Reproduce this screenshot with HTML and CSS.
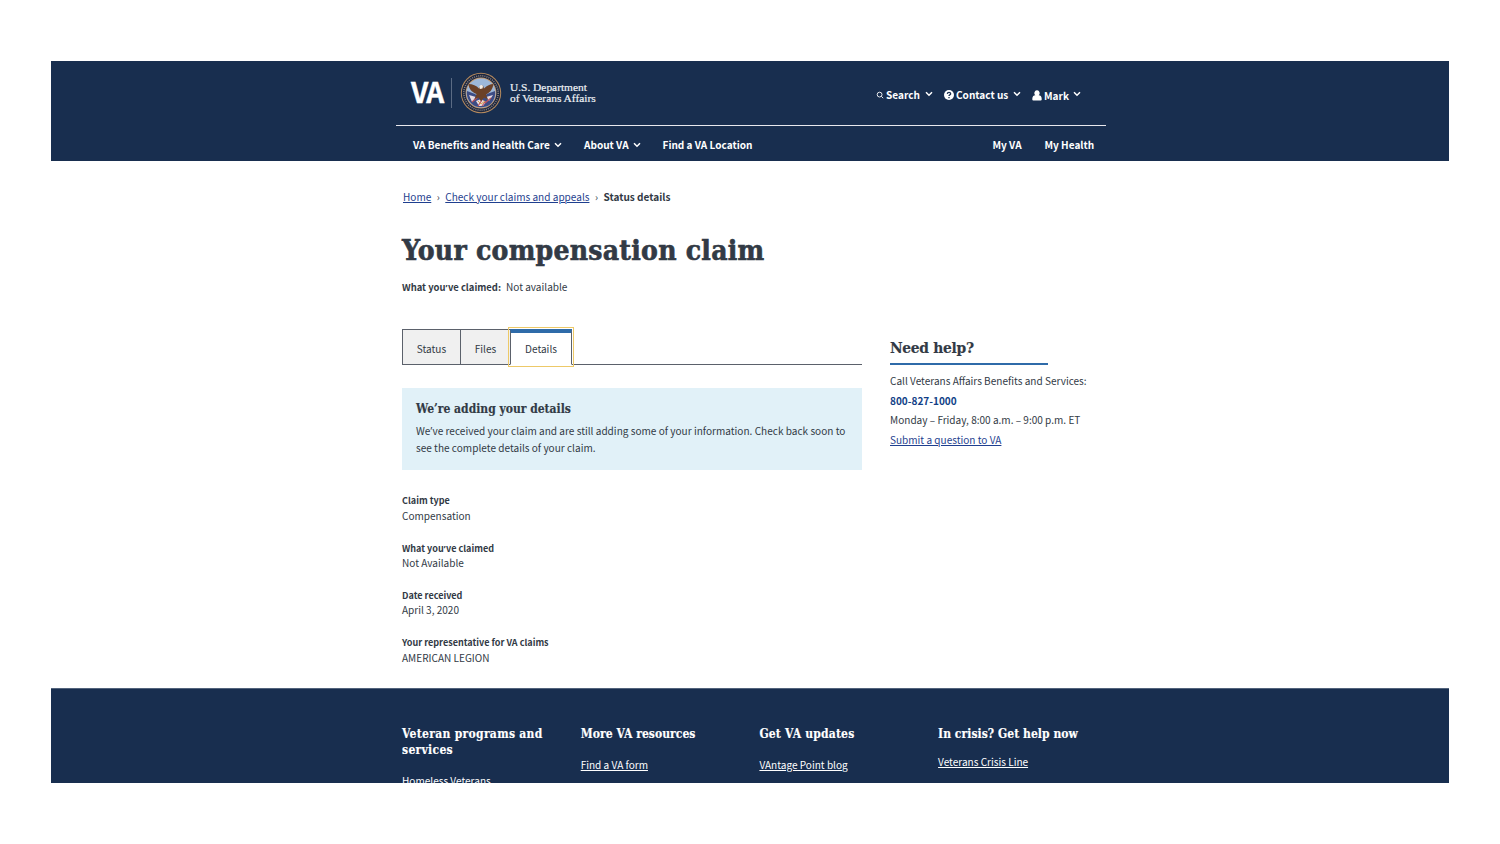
FILE: index.html
```html
<!DOCTYPE html>
<html lang="en">
<head>
<meta charset="utf-8">
<title>Your compensation claim</title>
<link rel="stylesheet" href="styles.css">
</head>
<body>
<div class="page">
  <header class="header">
    <div class="masthead">
      <div class="brand">
        <span class="va">VA</span>
        <span class="divider"></span>
        <svg class="seal" viewBox="0 0 42 42">
          <circle cx="21" cy="21" r="20.2" fill="#b58a5e"/>
          <circle cx="21" cy="21" r="19.2" fill="#1c2740"/>
          <circle cx="21" cy="21" r="17.200" fill="none" stroke="#8f8580" stroke-width="1.500" stroke-dasharray="1 1.1"/>
          <circle cx="21" cy="21" r="15.4" fill="#c39a70"/>
          <circle cx="21" cy="21" r="14.6" fill="#9db8da"/>
          <path d="M7 19l8 3 5 4 2 0 5-4 8-3c1 7-3 14-9 15.500q-5 1.600-10 0C10 32 6 26 7 19z" fill="#3c4c85"/>
          <path d="M9 23l7 2-4 5zM26 25l7-2-4 6zM16 29l5-2 5 3-3 4h-4z" fill="#e6dbe3"/>
          <path d="M12 30l6-5M25 31l6-5M18 34l4-6M22 34l3-4" stroke="#c0545a" stroke-width="1.100"/>
          <path d="M8.500 12c4 0 8 1.500 10.500 4.500l1-2.500 3-.5 1 3c3-3 6-4.500 9.500-4.500-1 6-4 9-7.500 10.500l2 5-4-2-3 4-2.500-4-4 1.500 2-5c-5-2-7.500-5-8-10z" fill="#6b4128"/>
          <path d="M19.300 14.500q2-2.500 3.700-.5l-.5 2.500-2.700.5z" fill="#f6efe6"/>
          <path d="M18 29l3 3 4-3" fill="none" stroke="#d3a24d"/>
        </svg>
        <span class="dept">U.S. Department<br><span class="dept-sub">of Veterans Affairs</span></span>
      </div>
      <div class="tools">
        <a class="tool search"><svg class="ic-search" viewBox="0 0 8 8"><circle cx="3.600" cy="3.600" r="2.400"/><path d="M5.300 5.300L7.200 7.200"/></svg><span class="tool-text">Search</span><svg class="chev" viewBox="0 0 8 6"><path d="M1 1.200l3 3 3-3"/></svg></a>
        <a class="tool contact"><svg class="ic-help" viewBox="0 0 10 10"><circle cx="5" cy="5" r="5"/><path d="M3.300 3.900Q3.400 2.400 5 2.400T6.700 3.700Q6.700 4.500 5.800 4.900Q5 5.300 5 6M5 7v1.200"/></svg><span class="tool-text">Contact us</span><svg class="chev" viewBox="0 0 8 6"><path d="M1 1.200l3 3 3-3"/></svg></a>
        <a class="tool user"><svg class="ic-user" viewBox="0 0 10 11"><path d="M5 .3a2.600 2.800 0 0 1 1.700 5Q9.700 5.600 9.700 9v.6q0 1-1 1H1.300q-1 0-1-1V9Q.3 5.600 3.300 5.300A2.600 2.800 0 0 1 5 .3z"/></svg><span class="tool-text">Mark</span><svg class="chev" viewBox="0 0 8 6"><path d="M1 1.200l3 3 3-3"/></svg></a>
      </div>
    </div>
    <nav class="nav">
      <a class="nav-benefits">VA Benefits and Health Care<svg class="chev" viewBox="0 0 8 6"><path d="M1 1.200l3 3 3-3"/></svg></a>
      <a class="nav-about">About VA<svg class="chev" viewBox="0 0 8 6"><path d="M1 1.200l3 3 3-3"/></svg></a>
      <a class="nav-find">Find a VA Location</a>
      <a class="nav-my">My VA</a>
      <a class="nav-health">My Health</a>
    </nav>
  </header>
  <main class="main">
    <nav class="crumbs"><a class="link">Home</a><span class="sep">›</span><a class="link">Check your claims and appeals</a><span class="sep">›</span><b>Status details</b></nav>
    <h1 class="title">Your compensation claim</h1>
    <p class="claimed"><b>What you<span class="apos">’</span>ve claimed:</b>Not available</p>
    <div class="columns">
      <section class="details">
        <div class="tabs">
          <a class="tab tab-status">Status</a><a class="tab tab-files">Files</a><a class="tab tab-details">Details</a>
        </div>
        <div class="alert">
          <h2 class="alert-title">We’re adding your details</h2>
          <p class="alert-text">We<span class="apos">’</span>ve received your claim and are still adding some of your information. Check back soon to<br>see the complete details of your claim.</p>
        </div>
        <dl class="facts">
          <div class="fact"><dt>Claim type</dt><dd>Compensation</dd></div>
          <div class="fact"><dt>What you<span class="apos">’</span>ve claimed</dt><dd>Not Available</dd></div>
          <div class="fact"><dt>Date received</dt><dd>April 3, 2020</dd></div>
          <div class="fact"><dt>Your representative for VA claims</dt><dd>AMERICAN LEGION</dd></div>
        </dl>
      </section>
      <aside class="help">
        <h2 class="help-title">Need help?</h2>
        <p class="help-line">Call Veterans Affairs Benefits and Services:</p>
        <p class="help-line phone">800-827-1000</p>
        <p class="help-line hours">Monday – Friday, 8:00 a.m. – 9:00 p.m. ET</p>
        <p class="help-line"><a class="link">Submit a question to VA</a></p>
      </aside>
    </div>
  </main>
  <footer class="footer">
    <div class="foot-col"><h2 class="foot-title programs">Veteran programs and<br>services</h2><a class="foot-link">Homeless Veterans</a></div>
    <div class="foot-col"><h2 class="foot-title">More VA resources</h2><a class="foot-link">Find a VA form</a></div>
    <div class="foot-col"><h2 class="foot-title updates">Get VA updates</h2><a class="foot-link">VAntage Point blog</a></div>
    <div class="foot-col crisis"><h2 class="foot-title">In crisis? Get help now</h2><a class="foot-link">Veterans Crisis Line</a></div>
  </footer>
</div>
</body>
</html>
```
FILE: styles.css
```css
* { box-sizing: border-box; }
body { margin: 0; background: #fff; }
h1, h2, p, dl, dd { margin: 0; }
.page {
  width: 1398px; height: 722px; margin: 61px 51px; overflow: hidden;
  display: flex; flex-direction: column;
  font: 10.060px/16px "Noto Sans CJK SC", "Open Sans", sans-serif; color: #323a45;
}
.apos { font-family: "Open Sans", sans-serif; line-height: 1; margin-right: 0.4px; }
.header { height: 100px; flex: none; background: #182e4f; color: #fff; font-weight: bold; }
.masthead {
  width: 710px; height: 65px; margin-left: 345px; padding-left: 15px;
  border-bottom: 1px solid #e8e8ee; display: flex; justify-content: space-between;
}
.brand { display: flex; align-items: center; height: 63px; }
.va { font-size: 28px; line-height: 30px; letter-spacing: -1.6px; width: 40px; margin-top: -3px; -webkit-text-stroke: 0.4px #fff; }
.divider { width: 1px; height: 30px; background: #5b6b84; margin-right: 9px; }
.seal { width: 42px; height: 42px; margin: 0 8px 0 -1px; }
.dept { font: 11.400px/11.500px "Liberation Serif", serif; color: #eef1f5; white-space: nowrap; -webkit-text-stroke: 0.2px #eef1f5; margin-top: 1px; }
.tools { display: flex; height: 68px; align-items: center; }
.tool { display: flex; align-items: center; }
.search { width: 68px; }
.contact { width: 88px; }
.user { width: 74px; padding-top: 1px; }
.tool-text { white-space: nowrap; }
.search .tool-text { width: 39px; }
.contact .tool-text { width: 57px; }
.user .tool-text { width: 29px; }
.chev { width: 8px; height: 6px; flex: none; fill: none; stroke: #fff; stroke-width: 1.500; }
.tool .chev { margin-bottom: 3px; }
.ic-search { width: 8px; height: 8px; margin-right: 2px; fill: none; stroke: #fff; stroke-width: 0.9; }
.ic-help { width: 10px; height: 10px; margin-right: 2px; fill: #fff; }
.ic-help path { fill: none; stroke: #182e4f; stroke-width: 1.300; }
.ic-user { width: 10px; height: 11px; margin-right: 2px; fill: #fff; }
.nav { display: flex; height: 37px; align-items: center; padding-left: 362px; white-space: nowrap; }
.nav .chev { margin: 0 0 1px 4px; }
.nav-benefits { width: 171px; }
.nav-about { width: 78.500px; }
.nav-find { width: 330px; }
.nav-my { width: 52px; }
.main { flex: none; height: 527px; padding: 28px 351px 0; }
.link { color: #1f3f8f; text-decoration: underline; }
.crumbs { display: flex; padding-left: 1px; }
.sep { width: 14px; text-align: center; }
.title, .alert-title, .help-title, .foot-title { font-family: "DejaVu Serif Condensed", "DejaVu Serif", serif; font-weight: bold; -webkit-text-stroke: 0.15px currentColor; }
.title { font-size: 28px; line-height: 40px; margin-top: 26px; white-space: nowrap; letter-spacing: 0.26px; -webkit-text-stroke: 0.6px currentColor; }
.claimed { margin-top: 8px; }
.claimed b { margin-right: 5px; font-size: 9.450px; }
.columns { display: flex; margin-top: 34px; }
.details { width: 460px; flex: none; margin-right: 28px; }
.tabs { display: flex; height: 36px; border-bottom: 1px solid #5b616b; }
.tab { height: 36px; line-height: 38px; text-align: center; border: 1px solid #5b616b; background: #f0f0f0; }
.tab-status { width: 59px; }
.tab-files { width: 49px; border-left: 0; border-right: 0; }
.tab-details { width: 62px; background: #fff; border-top: 4px solid #2f6ba9; border-bottom-color: #fff; line-height: 32px; outline: 1px solid #edc968; outline-offset: 1px; }
.alert { height: 82px; margin-top: 23px; padding: 12px 14px; background: #e1f1f8; }
.alert-title { font-size: 12px; line-height: 18px; }
.alert-text { line-height: 17px; margin-top: 4px; white-space: nowrap; letter-spacing: 0.01px; }
.facts { padding-top: 22.400px; }
.fact { height: 47.200px; }
.fact dt { font-weight: bold; font-size: 9.060px; }
.fact dd { margin-top: -0.4px; }
.help { width: 208px; flex: none; padding-top: 6px; white-space: nowrap; }
.help-title { width: 158px; height: 30px; font-size: 15.400px; letter-spacing: -0.3px; line-height: 26px; border-bottom: 2px solid #2f6ba9; margin-bottom: 6px; }
.help-line { line-height: 19.700px; }
.phone { font-weight: bold; color: #123f87; }
.footer { flex: 1; background: #182e4f; color: #fff; border-top: 1px solid #52637c; display: flex; padding: 37px 0 0 351px; }
.foot-col { width: 178.700px; flex: none; }
.foot-title { font-size: 12px; line-height: 16px; margin-bottom: 15px; white-space: nowrap; letter-spacing: 0.05px; }
.programs { letter-spacing: 0.3px; }
.updates { letter-spacing: 0.2px; }
.crisis .foot-title { margin-bottom: 12px; }
.foot-link { display: block; text-decoration: underline; }
```
